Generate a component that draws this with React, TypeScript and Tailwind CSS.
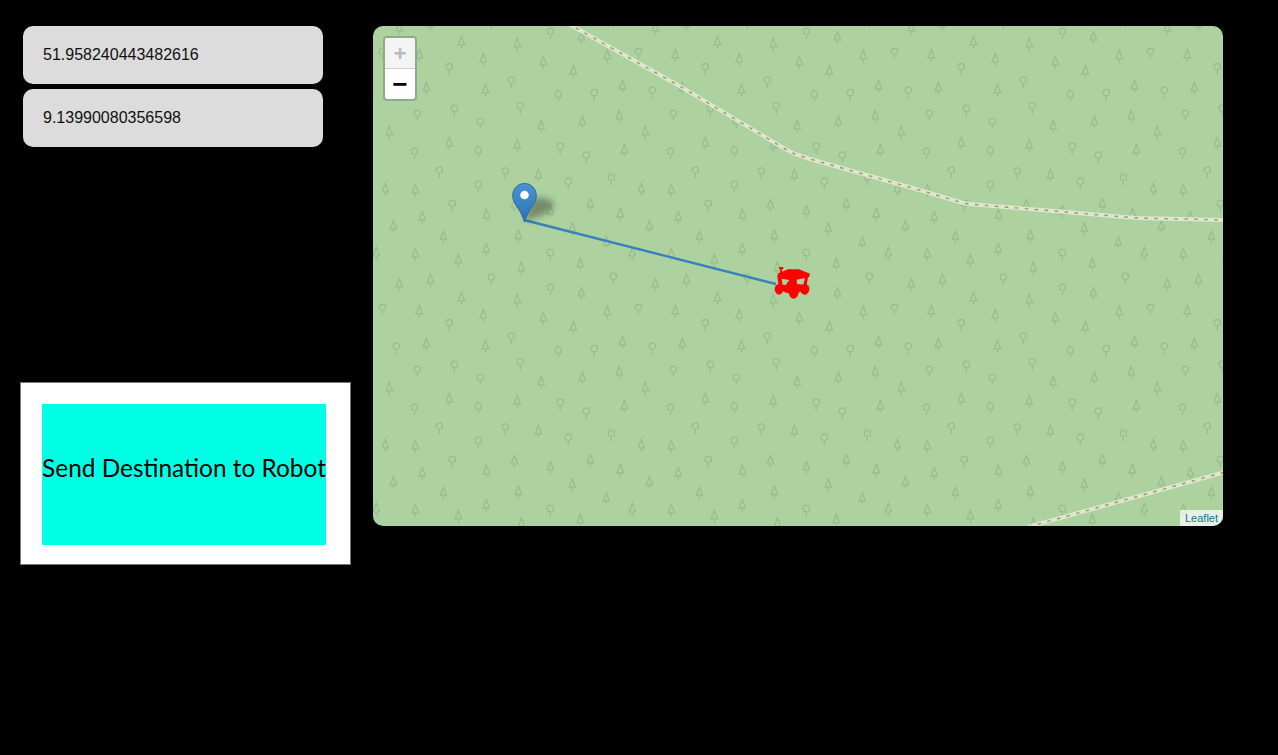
const pines = [
  [211, 33], [436, 30], [598, 8], [61, 2], [10, 82], [127, 85], [340, 70], [256, 103], [445, 126], [622, 115],
  [700, 50], [79, 175], [172, 163], [265, 217], [433, 223], [625, 202], [139, 256], [331, 268], [511, 277],
  [703, 259], [601, 304], [160, 355], [337, 361], [748, 349], [49, 487], [505, 469], [628, 457], [739, 439],
  [229, 520], [433, 526], [754, 541], [496, 616], [37, 658], [127, 661], [424, 706], [652, 703], [148, 742],
  [340, 736], [532, 724], [742, 733],
];

const rounds = [
  [532, 80], [355, 153], [721, 151], [532, 184], [28, 244], [229, 290], [415, 330], [70, 361], [244, 415],
  [556, 373], [664, 368], [133, 430], [442, 408], [322, 454], [124, 544], [316, 541], [562, 529], [640, 555],
  [199, 600], [397, 603], [586, 634], [715, 622], [316, 643], [238, 700],
];

const roads = [
  "M567 23L683 88L777 144Q786 150 795 154L810 159L923 191L956 201L968 204L1066 212L1136 218L1225 220",
  "M1028 527L1225 472",
];

function Forest() {
  const offsets = [-256, 0, 256];
  return (
    <pattern id="forest" patternUnits="userSpaceOnUse" x="373" y="226" width="256" height="256">
      {offsets.map((dx) =>
        offsets.map((dy) => (
          <g key={`${dx}${dy}`} fill="none" stroke="#98bc8c" strokeWidth="1.3" transform={`translate(${dx} ${dy})`}>
            {pines.map(([x, y]) => (
              <path key={`p${x}${y}`} d={`M${x / 3} ${y / 3 - 6}L${x / 3 + 3.2} ${y / 3 + 2.5}H${x / 3 - 3.2}ZM${x / 3} ${y / 3 + 2.5}V${y / 3 + 6.5}`} />
            ))}
            {rounds.map(([x, y]) => (
              <path key={`r${x}${y}`} d={`M${x / 3 - 3.2} ${y / 3}a3.2 3.2 0 1 0 6.4 0a3.2 3.2 0 1 0 -6.4 0M${x / 3} ${y / 3 + 3.2}V${y / 3 + 8}`} />
            ))}
          </g>
        ))
      )}
    </pattern>
  );
}

function Marker() {
  return (
    <>
      <path d="M524 221L532 199Q548 195 554 204Q553 214 524 221Z" fill="#000" opacity="0.33" filter="url(#soft)" />
      <g transform="translate(512 183)">
        <path
          d="M12.5 .5C5.8 .5 .7 6 .7 12.5C.7 18 3.5 21.5 6.5 26C9 30 11 34.5 12.5 38.7C14 34.5 16 30 18.5 26C21.5 21.5 24.3 18 24.3 12.5C24.3 6 19.2 .5 12.5 .5Z"
          fill="url(#pin)"
          stroke="#2e6c97"
        />
        <circle cx="12.5" cy="12" r="4.3" fill="#fff" />
      </g>
    </>
  );
}

// robot cart, drawn over the 3x crop coordinates
function Robot() {
  return (
    <g transform="translate(673 226) scale(.3333)" fill="#ff0000">
      <path d="M318 123H331V129H328L325 150H320L322 129H318Z" />
      <path
        fillRule="evenodd"
        d="M316 142L345 130L378 130L411 143L408 154L405 154L399 190L380 198L370 206L340 200L318 190L313 150ZM326 158L349 162L338 177L329 176ZM371 161L396 156L391 176L372 174Z"
      />
      <ellipse cx="318" cy="190" rx="13" ry="16" />
      <ellipse cx="362" cy="202" rx="14" ry="16" />
      <ellipse cx="395" cy="190" rx="14" ry="16" />
    </g>
  );
}

function MapPanel() {
  return (
    <div className="relative w-[850px] h-[500px] ml-[22px] rounded-[10px] overflow-hidden bg-[#aed1a0]">
      <svg className="absolute inset-0" width="850" height="500" viewBox="373 26 850 500">
        <defs>
          <Forest />
          <linearGradient id="pin" x1="0" y1="0" x2="0" y2="1">
            <stop offset="0" stopColor="#4b93d3" />
            <stop offset="1" stopColor="#2a72b4" />
          </linearGradient>
          <filter id="soft" x="-40%" y="-40%" width="180%" height="180%">
            <feGaussianBlur stdDeviation="3" />
          </filter>
        </defs>
        <rect x="373" y="26" width="850" height="500" fill="url(#forest)" />
        {roads.map((d) => (
          <g key={d} fill="none">
            <path d={d} stroke="#dbe8cf" strokeWidth="4" />
            <path d={d} stroke="#a8925f" strokeWidth="1.4" strokeDasharray="3.5 6.5" />
          </g>
        ))}
        <path d="M524 220L776 284" stroke="#3a80bd" strokeWidth="2.4" fill="none" />
        <Marker />
        <Robot />
      </svg>
      <div className="absolute left-[10px] top-[10px] w-[34px] rounded-[4px] border-2 border-[#8fa98a] bg-white font-['Liberation_Mono',monospace] font-bold">
        <div className="h-[31px] pt-[4px] flex items-center justify-center rounded-t-[2px] border-b border-[#cccccc] bg-[#f4f4f4] text-[22px] text-[#bbbbbb]">+</div>
        <div className="h-[30px] pt-[5px] flex items-center justify-center text-[26px] text-black">−</div>
      </div>
      <div className="absolute right-0 bottom-0 h-[16px] px-[5px] flex items-center bg-white/70 font-['Liberation_Sans',sans-serif] text-[11px] text-[#1a6f94]">
        Leaflet
      </div>
    </div>
  );
}

export default function App() {
  return (
    <div className="min-h-[755px] w-full bg-black pt-[26px] flex items-start font-['Liberation_Sans',sans-serif]">
      <div className="w-[331px] ml-[20px] flex flex-col">
        <div className="ml-[3px] w-[300px] h-[58px] rounded-[10px] bg-[#dcdcdc] px-[20px] flex items-center text-[16px] text-[#111111]">51.958240443482616</div>
        <div className="ml-[3px] mt-[5px] w-[300px] h-[58px] rounded-[10px] bg-[#dcdcdc] px-[20px] flex items-center text-[16px] text-[#111111]">9.13990080356598</div>
        <div className="mt-[235px] h-[183px] border border-[#777777] bg-white pl-[21px] pt-[21px]">
          <div className="w-[284px] h-[141px] pb-[12px] bg-[#00ffe5] flex items-center justify-center whitespace-nowrap font-['Lato',sans-serif] text-[24.4px] text-black">
            Send Destination to Robot
          </div>
        </div>
      </div>
      <MapPanel />
    </div>
  );
}
